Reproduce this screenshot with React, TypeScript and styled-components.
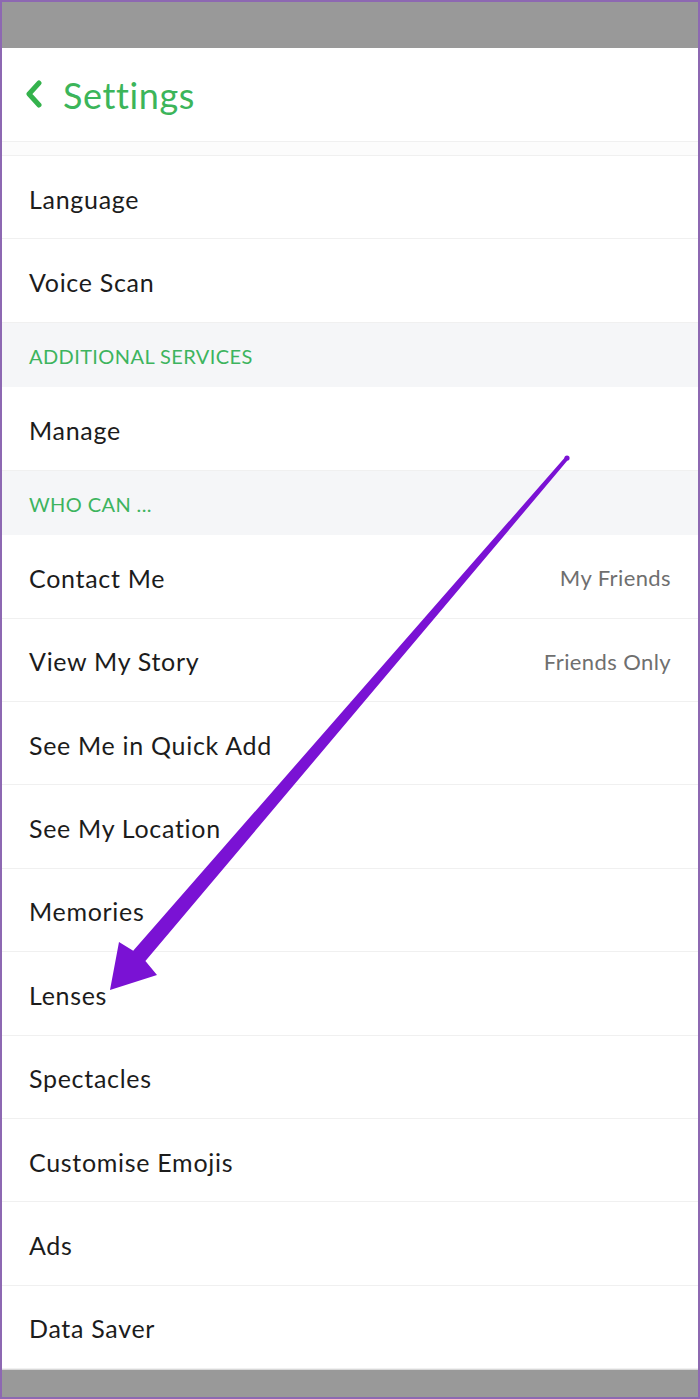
import React from "react";
import styled, { createGlobalStyle } from "styled-components";

const GlobalStyle = createGlobalStyle`
  html, body {
    margin: 0;
    padding: 0;
    background: #fff;
  }
  * {
    box-sizing: border-box;
  }
`;

type Item =
  | { kind: "row"; label: string; value?: string }
  | { kind: "section"; label: string };

const items: Item[] = [
  { kind: "row", label: "Language" },
  { kind: "row", label: "Voice Scan" },
  { kind: "section", label: "ADDITIONAL SERVICES" },
  { kind: "row", label: "Manage" },
  { kind: "section", label: "WHO CAN ..." },
  { kind: "row", label: "Contact Me", value: "My Friends" },
  { kind: "row", label: "View My Story", value: "Friends Only" },
  { kind: "row", label: "See Me in Quick Add" },
  { kind: "row", label: "See My Location" },
  { kind: "row", label: "Memories" },
  { kind: "row", label: "Lenses" },
  { kind: "row", label: "Spectacles" },
  { kind: "row", label: "Customise Emojis" },
  { kind: "row", label: "Ads" },
  { kind: "row", label: "Data Saver" },
];

export default function App() {
  return (
    <>
      <GlobalStyle />
      <Frame>
        <StatusBar />
        <Header>
          <BackIcon viewBox="0 0 20 28">
            <path d="M15 3 L5 14 L15 25" />
          </BackIcon>
          <Title>Settings</Title>
        </Header>
        <Spacer />
        <List>
          {items.map((item) =>
            item.kind === "section" ? (
              <Section key={item.label}>{item.label}</Section>
            ) : (
              <Row key={item.label}>
                <Label>{item.label}</Label>
                {item.value && <Value>{item.value}</Value>}
              </Row>
            )
          )}
        </List>
        <BottomBar />
        <Arrow viewBox="0 0 700 1399">
          <polygon
            points="568.5,459.3 145.4,961.1 157,975 110,990 119,942 133.2,950.7 565.5,456.7"
            fill="#7a12d4"
          />
          <circle cx="567" cy="458" r="2.6" fill="#7a12d4" />
        </Arrow>
      </Frame>
    </>
  );
}

const Frame = styled.div`
  position: relative;
  width: 700px;
  height: 1399px;
  border: 2px solid #8d68b2;
  display: flex;
  flex-direction: column;
  overflow: hidden;
  font-family: Lato, "Noto Sans", sans-serif;
  background: #fff;
`;

const StatusBar = styled.div`
  height: 46px;
  flex: none;
  background: #999999;
`;

const BottomBar = styled.div`
  flex: 1;
  background: #999999;
  border-top: 1px solid #d8d8d8;
`;

const Header = styled.div`
  height: 94px;
  flex: none;
  display: flex;
  align-items: center;
  gap: 19px;
  padding-left: 22px;
  border-bottom: 1px solid #f0f0f0;
`;

const BackIcon = styled.svg`
  width: 20px;
  height: 28px;
  margin-bottom: 2px;
  path {
    fill: none;
    stroke: #34b24c;
    stroke-width: 5;
    stroke-linecap: round;
    stroke-linejoin: round;
  }
`;

const Title = styled.span`
  font-size: 36px;
  color: #3cb55a;
  letter-spacing: 0.6px;
`;

const Spacer = styled.div`
  height: 14px;
  flex: none;
  background: #fcfcfc;
  border-bottom: 1px solid #f0f0f0;
`;

const List = styled.div`
  display: flex;
  flex-direction: column;
  flex: none;
`;

const Row = styled.div`
  height: 83.4px;
  display: flex;
  align-items: center;
  justify-content: space-between;
  padding: 3px 27px 0 27px;
  border-bottom: 1px solid #f0f0f0;
`;

const Label = styled.span`
  font-size: 25px;
  color: #1c1c1c;
  letter-spacing: 0.7px;
`;

const Value = styled.span`
  font-size: 22px;
  color: #6f6f6f;
  letter-spacing: 0.4px;
`;

const Section = styled.div`
  height: 64.5px;
  display: flex;
  align-items: center;
  padding: 2px 0 0 27px;
  background: #f5f6f8;
  color: #3db45e;
  font-size: 20px;
  letter-spacing: 0.4px;
`;

const Arrow = styled.svg`
  position: absolute;
  top: -2px;
  left: -2px;
  width: 700px;
  height: 1399px;
  pointer-events: none;
`;
